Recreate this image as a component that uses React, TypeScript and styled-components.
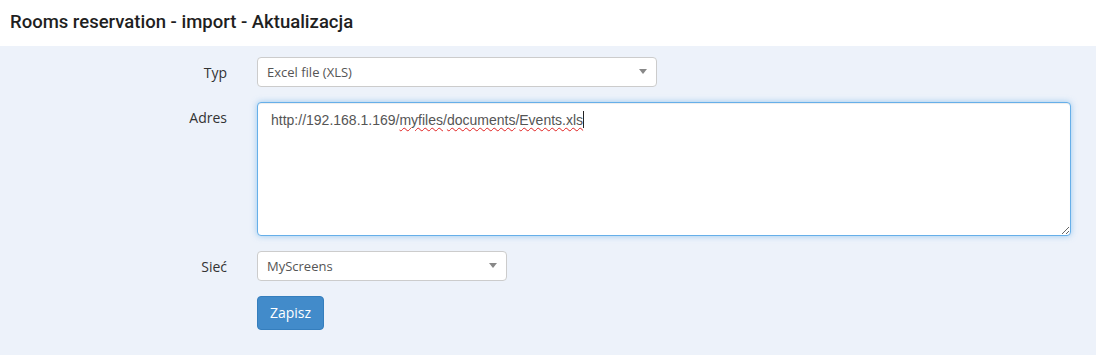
import styled, {createGlobalStyle} from 'styled-components'

const GlobalStyle = createGlobalStyle`
  html, body {
    margin: 0;
    padding: 0;
    background: #edf2fa;
  }
  body {
    font-family: "Open Sans", "Liberation Sans", sans-serif;
    color: #333;
  }
`

const Header = styled.header`
  height: 46px;
  display: flex;
  align-items: center;
  padding: 0 10px;
  background: #fff;
`

const Title = styled.h1`
  margin: 0 0 2px;
  font-family: Roboto, "Liberation Sans", sans-serif;
  font-size: 18.5px;
  font-weight: 500;
  color: #1f1f1f;
`

const Body = styled.main`
  background: #edf2fa;
  padding: 11px 25px 25px 0;
  min-height: 309px;
  box-sizing: border-box;
`

const Form = styled.form`
  display: grid;
  grid-template-columns: 227px 1fr;
  column-gap: 30px;
  row-gap: 15px;
  align-items: start;
`

const Label = styled.label`
  text-align: right;
  font-size: 14px;
  color: #333;
  padding-top: 7px;
  line-height: 17px;
`

const SelectBox = styled.div<{$width: number}>`
  width: ${p => p.$width}px;
  height: 30px;
  box-sizing: border-box;
  border: 1px solid #ccc;
  border-radius: 4px;
  background: #fff;
  display: flex;
  align-items: center;
  padding: 0 9px 1px 9px;
  font-size: 13px;
  color: #555;
`

const Arrow = styled.span`
  margin-left: auto;
  width: 0;
  height: 0;
  border-left: 4px solid transparent;
  border-right: 4px solid transparent;
  border-top: 5px solid #888;
`

const TextArea = styled.div`
  height: 134px;
  box-sizing: border-box;
  border: 1px solid #66afe9;
  border-radius: 4px;
  background: #fff;
  box-shadow: inset 0 1px 1px rgba(0, 0, 0, 0.075), 0 0 6px rgba(102, 175, 233, 0.6);
  padding: 7px 13px;
  font-family: "Liberation Sans", Arial, sans-serif;
  font-size: 14px;
  line-height: 20px;
  color: #555;
  overflow: auto;
  resize: both;
`

const Misspelled = styled.span`
  text-decoration: underline wavy #e02020;
  text-decoration-thickness: 1px;
  text-underline-offset: 2px;
`

const Caret = styled.span`
  display: inline-block;
  width: 1px;
  height: 17px;
  background: #222;
  vertical-align: -3px;
`

const SaveButton = styled.button`
  width: 67px;
  height: 34px;
  border: 1px solid #357ebd;
  border-radius: 4px;
  background: #428bca;
  color: #fff;
  font-family: "Open Sans", sans-serif;
  font-size: 14px;
  padding: 0 0 2px;
  cursor: pointer;
`

export default function App() {
  return (
    <>
      <GlobalStyle />
      <Header>
        <Title>Rooms reservation - import - Aktualizacja</Title>
      </Header>
      <Body>
        <Form onSubmit={e => e.preventDefault()}>
          <Label>Typ</Label>
          <SelectBox $width={400}>
            Excel file (XLS)
            <Arrow />
          </SelectBox>

          <Label>Adres</Label>
          <TextArea>
            http://192.168.1.169/<Misspelled>myfiles</Misspelled>/
            <Misspelled>documents</Misspelled>/<Misspelled>Events.xls</Misspelled>
            <Caret />
          </TextArea>

          <Label>Sieć</Label>
          <SelectBox $width={250}>
            MyScreens
            <Arrow />
          </SelectBox>

          <span />
          <SaveButton type="submit">Zapisz</SaveButton>
        </Form>
      </Body>
    </>
  )
}
